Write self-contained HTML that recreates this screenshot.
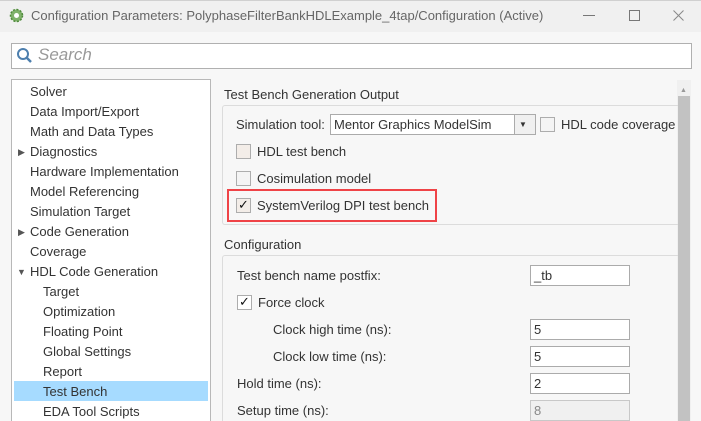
<!DOCTYPE html><html style="overflow:hidden;width:701px;height:421px"><head><style>
body{margin:0;width:701px;height:421px;overflow:hidden;background:#f7f7f7;font-family:"Liberation Sans",sans-serif;font-size:13px;color:#333;position:relative}
div,span{position:absolute;box-sizing:border-box}
.t{white-space:nowrap;line-height:16px}
.cb{width:15px;height:15px;border:1px solid #adadad;background:#f4f4f4}
.in{border:1px solid #ababab;background:#fff;height:21px;padding-left:3px;line-height:19px;width:100px;left:530px}
.li{left:30px}
.sub{left:43px}
</style></head><body>
<div style="left:0;top:0;width:701px;height:32px;background:#f0f0f0;border-top:1px solid #d0d0d0"></div>
<svg style="position:absolute;left:9px;top:8px" width="15" height="15" viewBox="0 0 15 15"><circle cx="7.5" cy="7.5" r="6" fill="#7fb26a"/><circle cx="7.5" cy="7.5" r="2.5" fill="#fff"/><circle cx="7.5" cy="7.5" r="6" fill="none" stroke="#4e8a3a" stroke-width="1.5" stroke-dasharray="2 1.5"/></svg>
<div class="t" style="left:31px;top:8px;color:#666;font-size:13px">Configuration Parameters: PolyphaseFilterBankHDLExample_4tap/Configuration (Active)</div>
<div style="left:583px;top:15px;width:12px;height:1px;background:#777"></div>
<div style="left:629px;top:10px;width:11px;height:11px;border:1px solid #777"></div>
<svg style="position:absolute;left:673px;top:10px" width="11" height="11" viewBox="0 0 11 11"><path d="M0.5 0.5L10.5 10.5M10.5 0.5L0.5 10.5" stroke="#888" stroke-width="1"/></svg>
<div style="left:11px;top:43px;width:681px;height:26px;background:#fff;border:1px solid #b0b0b0"></div>
<svg style="position:absolute;left:16px;top:47px" width="18" height="18" viewBox="0 0 18 18"><circle cx="7" cy="7" r="5" fill="none" stroke="#4d7fae" stroke-width="2"/><line x1="10.5" y1="10.5" x2="15" y2="15" stroke="#4d7fae" stroke-width="2.5"/></svg>
<div class="t" style="left:38px;top:46px;font-size:17px;font-style:italic;color:#999;line-height:18px">Search</div>
<div style="left:11px;top:79px;width:200px;height:342px;background:#fff;border:1px solid #b8b8b8;border-bottom:none"></div>
<div style="left:14px;top:381px;width:194px;height:20px;background:#a6dbff"></div>
<div class="t li" style="top:84px">Solver</div>
<div class="t li" style="top:104px">Data Import/Export</div>
<div class="t li" style="top:124px">Math and Data Types</div>
<div class="t li" style="top:144px">Diagnostics</div>
<div class="t li" style="top:164px">Hardware Implementation</div>
<div class="t li" style="top:184px">Model Referencing</div>
<div class="t li" style="top:204px">Simulation Target</div>
<div class="t li" style="top:224px">Code Generation</div>
<div class="t li" style="top:244px">Coverage</div>
<div class="t li" style="top:264px">HDL Code Generation</div>
<div class="t sub" style="top:284px">Target</div>
<div class="t sub" style="top:304px">Optimization</div>
<div class="t sub" style="top:324px">Floating Point</div>
<div class="t sub" style="top:344px">Global Settings</div>
<div class="t sub" style="top:364px">Report</div>
<div class="t sub" style="top:384px">Test Bench</div>
<div class="t sub" style="top:404px">EDA Tool Scripts</div>
<div class="t" style="left:18px;top:144px;font-size:9px;color:#555">▶</div>
<div class="t" style="left:18px;top:224px;font-size:9px;color:#555">▶</div>
<div class="t" style="left:17px;top:264px;font-size:9px;color:#555">▼</div>
<div style="left:677px;top:80px;width:14px;height:341px;background:#f0f0f0"></div>
<div style="left:678px;top:96px;width:12px;height:325px;background:#c2c2c2"></div>
<div class="t" style="left:680px;top:83px;font-size:7px;color:#999">▲</div>
<div class="t" style="left:224px;top:87px">Test Bench Generation Output</div>
<div style="left:222px;top:105px;width:456px;height:120px;border:1px solid #dcdcdc;border-right:none;border-radius:3px 0 0 3px"></div>
<div class="t" style="left:236px;top:117px">Simulation tool:</div>
<div style="left:330px;top:114px;width:206px;height:21px;background:#fff;border:1px solid #ababab"></div>
<div class="t" style="left:334px;top:117px">Mentor Graphics ModelSim</div>
<div style="left:514px;top:115px;width:21px;height:19px;background:#f0f0f0;border-left:1px solid #ababab"></div>
<div class="t" style="left:519px;top:117px;font-size:8px">▼</div>
<div class="cb" style="left:540px;top:117px"></div>
<div class="t" style="left:561px;top:117px">HDL code coverage</div>
<div class="cb" style="left:236px;top:144px;background:#f3ede8"></div>
<div class="t" style="left:257px;top:144px">HDL test bench</div>
<div class="cb" style="left:236px;top:171px"></div>
<div class="t" style="left:257px;top:171px">Cosimulation model</div>
<div class="cb" style="left:236px;top:198px;background:#f3ede8"></div>
<div class="t" style="left:238px;top:197px;font-size:13px;color:#111">✓</div>
<div class="t" style="left:257px;top:198px">SystemVerilog DPI test bench</div>
<div style="left:227px;top:189px;width:210px;height:33px;border:2px solid #ef4347"></div>
<div class="t" style="left:224px;top:237px">Configuration</div>
<div style="left:222px;top:255px;width:456px;height:166px;border:1px solid #dcdcdc;border-right:none;border-bottom:none;border-radius:3px 0 0 0"></div>
<div class="t" style="left:237px;top:268px">Test bench name postfix:</div>
<div class="in" style="top:265px">_tb</div>
<div class="cb" style="left:237px;top:295px;background:#fff"></div>
<div class="t" style="left:239px;top:294px;color:#111">✓</div>
<div class="t" style="left:258px;top:295px">Force clock</div>
<div class="t" style="left:273px;top:322px">Clock high time (ns):</div>
<div class="in" style="top:319px">5</div>
<div class="t" style="left:273px;top:349px">Clock low time (ns):</div>
<div class="in" style="top:346px">5</div>
<div class="t" style="left:237px;top:376px">Hold time (ns):</div>
<div class="in" style="top:373px">2</div>
<div class="t" style="left:237px;top:403px">Setup time (ns):</div>
<div class="in" style="top:400px;background:#f0f0f0;border-color:#c8c8c8;color:#888">8</div>
</body></html>
